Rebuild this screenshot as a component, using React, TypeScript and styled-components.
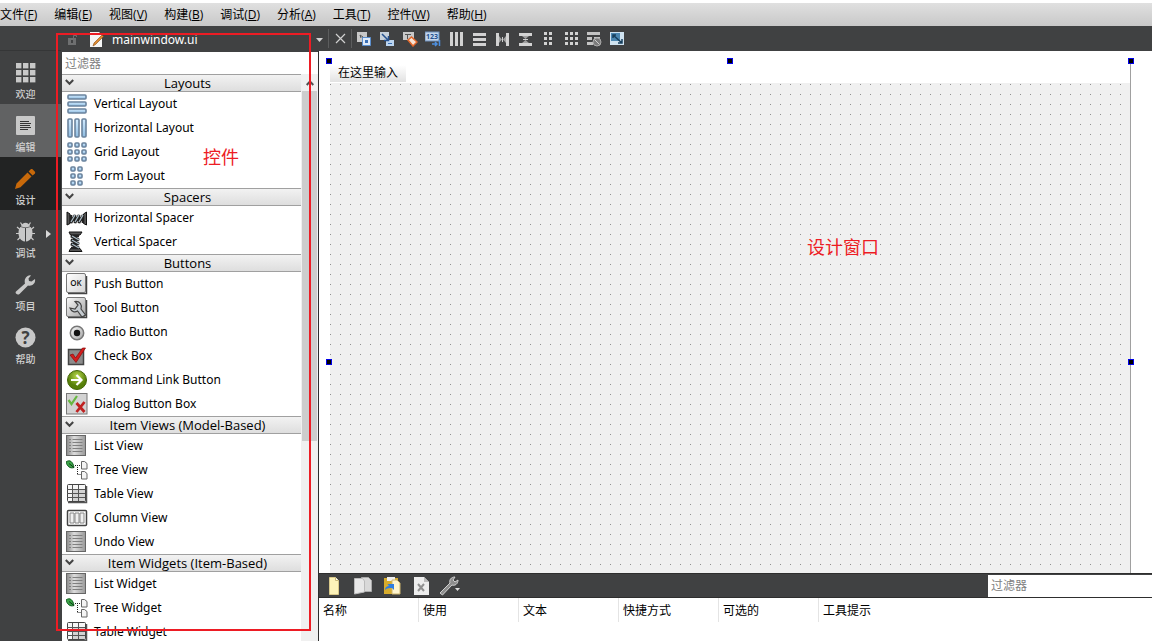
import React from 'react';
import styled, { createGlobalStyle } from 'styled-components';

const Global = createGlobalStyle`
  * { box-sizing: border-box; }
  body {
    margin: 0;
    background: #fff;
    color: #000;
    font: 12px/16px "Open Sans", "Noto Sans CJK SC", sans-serif;
  }
  button, input { font: inherit; color: inherit; border: 0; margin: 0; padding: 0; background: none; border-radius: 0; }
  button { cursor: pointer; }
  svg { display: block; flex: none; }
`;

const Window = styled.div`
  position: relative;
  display: flex;
  flex-direction: column;
  height: 100vh;
  overflow: hidden;
`;

const MenuBar = styled.nav`
  flex: none;
  display: flex;
  gap: 17px;
  height: 26px;
  border-top: 3px solid #fff;
  background: linear-gradient(#e0e0e0, #c8c8c8);
`;

const MenuButton = styled.button`
  white-space: nowrap;
  u { text-underline-offset: 1px; }
`;

const Body = styled.div`
  flex: 1;
  display: flex;
  min-height: 0;
`;

const Rail = styled.aside`
  flex: none;
  width: 61px;
  background: #404142;
`;

const RailTop = styled.div`
  height: 25px;
  border-bottom: 1px solid #353637;
`;

const ModeButton = styled.button<{ $tone?: string }>`
  position: relative;
  display: flex;
  flex-direction: column;
  align-items: center;
  gap: 4px;
  width: 100%;
  height: 53px;
  padding: 11px 10px 0 0;
  background: ${(p) => p.$tone ?? 'transparent'};
  color: #d0d0d0;
  font: 500 10px/14px "Noto Sans CJK SC", sans-serif;
`;

const FlyoutArrow = styled.svg`
  position: absolute;
  right: 10px;
  top: 20px;
`;

const Main = styled.div`
  flex: 1;
  min-width: 0;
  display: flex;
  flex-direction: column;
  background: #404142;
`;

const Toolbar = styled.header`
  flex: none;
  display: flex;
  align-items: center;
  height: 25px;
`;

const FileTab = styled.button`
  display: flex;
  align-items: center;
  width: 267px;
  padding: 2px 5px 0 6px;
  color: #fff;
  font-family: "Noto Sans", sans-serif;
  text-align: left;
`;

const FileName = styled.span`
  flex: 1;
  padding-left: 7px;
`;

const FileIconSlot = styled.span`
  padding-left: 13px;
`;

const Divider = styled.i`
  width: 1px;
  height: 19px;
  background: #5c5d5e;
`;

const ToolButton = styled.button<{ $narrow?: boolean }>`
  display: grid;
  place-items: center;
  width: ${(p) => (p.$narrow ? 22 : 23)}px;
  height: 25px;
`;

const Workspace = styled.div`
  flex: 1;
  display: flex;
  min-height: 0;
`;

const WidgetBox = styled.section`
  flex: none;
  display: flex;
  flex-direction: column;
  width: 258px;
  padding: 1px 0 0 1px;
  border-right: 1px solid #2e2e2e;
`;

const FilterInput = styled.input<{ $width?: string }>`
  width: ${(p) => p.$width ?? '100%'};
  height: 22px;
  padding: 0 3px;
  background: #fff;
  outline: 0;
  &::placeholder { color: #808080; opacity: 1; }
`;

const ListArea = styled.div`
  flex: 1;
  display: flex;
  min-height: 0;
  overflow: hidden;
  background: #fff;
`;

const Groups = styled.div`
  flex: 1;
`;

const GroupHeader = styled.button`
  display: flex;
  align-items: center;
  width: 100%;
  height: 18px;
  padding-left: 3px;
  border-top: 1px solid #a0a0a0;
  border-bottom: 1px solid #a0a0a0;
  background: linear-gradient(#f2f2f2, #dedede);
  font-size: 13px;
  span { flex: 1; text-align: center; }
`;

const Items = styled.ul`
  margin: 0;
  padding: 0;
  list-style: none;
`;

const Item = styled.li`
  display: flex;
  align-items: center;
  gap: 6px;
  height: 24px;
  padding-left: 4px;
  font-family: "Noto Sans", sans-serif;
  white-space: nowrap;
`;

const ItemName = styled.span`
  padding-bottom: 1px;
`;

const ScrollTrack = styled.div`
  display: flex;
  flex-direction: column;
  align-items: center;
  width: 17px;
  padding: 0 1px;
  background: #f0f0f0;
`;

const ScrollUp = styled.button`
  display: grid;
  place-items: center;
  width: 15px;
  height: 17px;
`;

const ScrollThumb = styled.div`
  width: 15px;
  height: 350px;
  background: #cdcdcd;
`;

const Editor = styled.main`
  flex: 1;
  min-width: 0;
  display: flex;
  flex-direction: column;
`;

const Canvas = styled.section`
  flex: 1;
  min-height: 0;
  overflow: hidden;
  padding: 10px;
  background: #fff;
`;

const Form = styled.div`
  position: relative;
  display: flex;
  flex-direction: column;
  width: 802px;
  height: 602px;
  border-left: 1px solid #fff;
  border-right: 1px solid #a0a0a0;
`;

const FormMenu = styled.div`
  height: 22px;
`;

const TypeHere = styled.button`
  height: 21px;
  padding: 2px 8px 0;
  background: linear-gradient(#fff 20%, #e2e2e2);
`;

const FormGrid = styled.div`
  flex: 1;
  background: #f0f0f0 conic-gradient(from 270deg at 1px 1px, #909090 90deg, transparent 0) 0 1px / 10px 10px;
`;

const Handle = styled.i<{ $x: string; $y: string }>`
  position: absolute;
  left: ${(p) => p.$x};
  top: ${(p) => p.$y};
  width: 6px;
  height: 6px;
  border: 1px solid #0000e8;
  background: #000;
`;

const ActionPanel = styled.section`
  flex: none;
  height: 68px;
  background: #fff;
`;

const ActionBar = styled.div`
  display: flex;
  align-items: center;
  height: 25px;
  border-top: 1px solid #2e2e2e;
  border-bottom: 1px solid #2e2e2e;
  background: #404142;
`;

const ActionButton = styled.button`
  display: grid;
  place-items: center;
  width: 29px;
  height: 23px;
`;

const Spring = styled.div`
  flex: 1;
`;

const ActionTable = styled.table`
  border-collapse: separate;
  border-spacing: 0;
  table-layout: fixed;
  width: 100%;
  th {
    width: 100px;
    height: 24px;
    padding: 2px 4px 0;
    border-right: 1px solid #e4e4e4;
    font-weight: 400;
    text-align: left;
    white-space: nowrap;
  }
  th:last-child { width: auto; border: 0; }
`;

const MarkerFrame = styled.div`
  position: absolute;
  left: 56px;
  top: 33px;
  width: 255px;
  height: 598px;
  border: 2px solid #ed1c24;
  pointer-events: none;
`;

const MarkerText = styled.span<{ $x: number; $y: number }>`
  position: absolute;
  left: ${(p) => p.$x}px;
  top: ${(p) => p.$y}px;
  color: #ed1c24;
  font: 18px/24px "Noto Sans CJK SC", sans-serif;
`;

/* ---------- mode icons ---------- */

const light = '#c8c8c8';

const WelcomeIcon = () => (
  <svg width="21" height="21" viewBox="0 0 21 21" fill={light}>
    {[1, 8, 15].map((y) => [1, 8, 15].map((x) => <rect key={x + '-' + y} x={x} y={y} width="5.4" height="5.4" />))}
  </svg>
);
const EditIcon = () => (
  <svg width="21" height="21" viewBox="0 0 21 21">
    <rect x="1" y="1" width="19" height="19" rx="1" fill={light} />
    <path d="M5 6.500h9M5 8.500h11M5 10.500h10M5 12.500h11M5 14.500h8" stroke="#333" />
  </svg>
);
const DesignIcon = () => (
  <svg width="21" height="21" viewBox="0 0 21 21" fill="#c8690a">
    <path d="M0 21l1.500-5.500L12.500 4.500l4 4L5.500 19.300zM13.600 3.400L16 1l1.200.1 3 3-.2 1.300-2.400 2.200z" />
  </svg>
);
const DebugIcon = () => (
  <svg width="21" height="21" viewBox="0 0 21 21">
    <path d="M7 4L5.500 1.500M14 4l1.500-2.500M5 8.500L2 6M16 8.500L19 6M5 12.500H1M16 12.500h4M5.500 16l-3 3M15.500 16l3 3" stroke={light} strokeWidth="1.200" />
    <path d="M6 5.500C7 .5 14 .5 15 5.500l-4.500 1zM10 7v13.500C5.500 20 3.500 16 3.500 12c0-2.500.5-4 1.800-6zM11 7v13.500c4.500-.5 6.500-4.500 6.500-8.500 0-2.500-.5-4-1.800-6z" fill={light} />
  </svg>
);
const ProjectIcon = () => (
  <svg width="21" height="21" viewBox="0 0 21 21">
    <path d="M1 17.500L10 9.500C9 6 10.500 2 15 1.200l1 .3-2.500 3 .5 2.500 2.500.5 3.500-2.500c.8 4-2.500 7.500-7 6.500L4.500 20C2.500 21.500-.5 19.500 1 17.500z" fill={light} />
  </svg>
);
const HelpIcon = () => (
  <svg width="21" height="21" viewBox="0 0 21 21">
    <circle cx="10.500" cy="10.500" r="10" fill={light} />
    <text x="10.500" y="16.500" textAnchor="middle" fill="#404142" fontFamily="Open Sans, sans-serif" fontWeight="700" fontSize="17">?</text>
  </svg>
);

/* ---------- toolbar icons ---------- */

const Chevron = () => (
  <svg width="9" height="8" viewBox="0 0 9 8"><path d="M.8 1l3.700 3.800L8.200 1" fill="none" stroke="#444" strokeWidth="2" /></svg>
);
const DownArrow = () => <svg width="7" height="4" viewBox="0 0 7 4"><path d="M0 0h7L3.500 4z" fill="#d0d0d0" /></svg>;

const T = ({ children }: { children: React.ReactNode }) => (
  <svg width="16" height="16" viewBox="0 0 16 16">{children}</svg>
);

const designTools: [string, React.ReactNode][] = [
  ['编辑控件', <T><path d="M1 1h10v5H6v5H1z" fill="#c8c8c8" /><path d="M4 4l3 2M4 4l1 3" stroke="#555" fill="none" /><path d="M6.500 6.500h8v8h-8z" fill="#dfeaf8" stroke="#5b8fce" /><rect x="9" y="9" width="3" height="3" fill="#3a6fb5" /></T>],
  ['编辑信号/槽', <T><path d="M1 1h9v8H1z" fill="#c4cfda" /><path d="M7 9h8v6H7z" fill="#bcd5f0" /><path d="M3 3l6 6M9.500 5v4.500H5" stroke="#24508e" strokeWidth="1.500" fill="none" /><path d="M9 12.500h4" stroke="#3a6fb5" /></T>],
  ['编辑伙伴', <T><path d="M1 1h11v8H1z" fill="#c8c8c8" /><path d="M3 3.500h6M5.500 3.500V8" stroke="#555" /><path d="M6 9l3.500-3 5.500 5-4 4z" fill="#f7e3d4" stroke="#e2672a" strokeWidth="1.500" /></T>],
  ['编辑 Tab 顺序', <T><rect x="0" y="1" width="14" height="9" fill="#c3d6ec" stroke="#6c8fbb" /><text x="1" y="8" fontSize="7" fontWeight="700" fontFamily="Open Sans, sans-serif" fill="#24508e">123</text><path d="M7 13h5M10 11l2 2-2 2M14.500 9v6" stroke="#4c8fe0" fill="none" strokeWidth="1.500" /></T>],
  ['水平布局', <T><path d="M2 1h3v14H2zM7 1h3v14H7zM12 1h3v14h-3z" fill="#d2d2d2" /></T>],
  ['垂直布局', <T><path d="M2 2h13v3H2zM2 7h13v3H2zM2 12h13v3H2z" fill="#d2d2d2" /></T>],
  ['使用分裂器水平布局', <T><path d="M2 2h3v13H2zM12 2h3v13h-3z" fill="#d2d2d2" /><path d="M5 5l3 3.500L5 12zM12 5L9 8.500l3 3.500z" fill="#a0a0a0" /><path d="M8.500 6v5" stroke="#ccc" /></T>],
  ['使用分裂器垂直布局', <T><path d="M2 2h13v3H2zM2 12h13v3H2z" fill="#d2d2d2" /><path d="M5 5l3.500 3L12 5zM5 12l3.500-3 3.500 3z" fill="#a0a0a0" /><path d="M6 8.500h5" stroke="#ccc" /></T>],
  ['在窗体布局中布局', <T><path d="M4 1h3v3H4zM9 1h3v3H9zM4 6h3v3H4zM9 6h3v3H9zM4 11h3v3H4zM9 11h3v3H9z" fill="#d2d2d2" /></T>],
  ['栅格布局', <T><path d="M2 1h3v3H2zM7 1h3v3H7zM12 1h3v3h-3zM2 6h3v3H2zM7 6h3v3H7zM12 6h3v3h-3zM2 11h3v3H2zM7 11h3v3H7zM12 11h3v3h-3z" fill="#d2d2d2" /></T>],
  ['打破布局', <T><path d="M1 1h13v3H1zM1 6h5v3H1zM8 6h6v2H8zM1 11h6v3H1z" fill="#c4c4c4" /><circle cx="11" cy="11" r="4" fill="#7b7b7b" stroke="#aaa" /><path d="M8.500 8.500l5 5" stroke="#ccc" /></T>],
  ['调整大小', <T><rect x="1" y="1" width="14" height="13" fill="#cfe2f0" /><path d="M2 2h9v8H2z" fill="#4b86b0" /><path d="M4 4l9 8M4 7V4h3M13 8v4H9" stroke="#173f5d" fill="none" strokeWidth="1.500" /></T>],
];

/* ---------- widget icons ---------- */

const W = ({ children }: { children: React.ReactNode }) => (
  <svg width="22" height="22" viewBox="0 0 22 22">{children}</svg>
);
const Defs = () => (
  <svg width="0" height="0" aria-hidden="true">
    <defs>
      <linearGradient id="blue" x2="0" y2="1"><stop stopColor="#d4ecff" /><stop offset="1" stopColor="#8dbbe0" /></linearGradient>
      <linearGradient id="gray" x2="1" y2="1"><stop stopColor="#fafafa" /><stop offset="1" stopColor="#a4a4a4" /></linearGradient>
      <linearGradient id="push" x2="1" y2="1"><stop stopColor="#fff" /><stop offset="1" stopColor="#d4d4d4" /></linearGradient>
      <linearGradient id="list" x2="1"><stop stopColor="#888" /><stop offset=".4" stopColor="#ddd" /><stop offset="1" stopColor="#999" /></linearGradient>
      <radialGradient id="green" cy=".3"><stop stopColor="#b7d84c" /><stop offset="1" stopColor="#567f09" /></radialGradient>
    </defs>
  </svg>
);

const blueBox = (x: number, y: number, w: number, h: number) => (
  <rect key={x + ',' + y} x={x + 1} y={y + 1} width={w} height={h} rx="1" fill="url(#blue)" stroke="#6a839d" strokeWidth="1.600" />
);
const VLayout = () => <W>{[1, 8, 15].map((y) => blueBox(1, y, 18, 4))}</W>;
const HLayout = () => <W>{[1, 8, 15].map((x) => blueBox(x, 1, 4, 18))}</W>;
const GridLayout = () => <W>{[1, 8, 15].map((y) => [1, 8, 15].map((x) => blueBox(x, y, 4, 4)))}</W>;
const FormLayout = () => <W>{[1, 8, 15].map((y) => [4, 11].map((x) => blueBox(x, y, 4, 4)))}</W>;
const spring = (
  <>
    <path d="M1 5v13l3-1.500V7zM20.500 5v13l-3-1.500V7z" fill="#555" stroke="#111" />
    <path d="M5 8v8l4-8v8l4-8v8l4-8v8" fill="none" stroke="#222" strokeWidth="2.600" />
    <path d="M5 15l4-7M9 15l4-7M13 15l4-7" stroke="#a9bbc5" strokeWidth="1.300" />
  </>
);
const HSpacer = () => <W>{spring}</W>;
const VSpacer = () => <W><g transform="rotate(90 11 11) translate(0 1)">{spring}</g></W>;
const Plate = ({ fill }: { fill: string }) => (
  <>
    <path d="M2 20.500h18.500V3" fill="none" stroke="#444" strokeWidth="1.500" />
    <rect x=".5" y=".5" width="19" height="19" rx="1.500" fill={fill} stroke="#777" />
  </>
);
const PushIcon = () => (
  <W>
    <Plate fill="url(#push)" />
    <text x="10" y="12.500" textAnchor="middle" fontSize="8" fontWeight="600" fontFamily="Open Sans, sans-serif" fill="#111">OK</text>
  </W>
);
const ToolIcon = () => (
  <W>
    <Plate fill="url(#gray)" />
    <path d="M4 11c1.500 4 5 4.500 7.500 3l4.500 6 3.500-2-4.500-6c1.500-4-1-8-6-7.500l3 3.500-3 4z" fill="#c5cbd0" stroke="#444" strokeWidth="1.200" />
  </W>
);
const RadioIcon = () => (
  <W>
    <circle cx="11" cy="12" r="6.700" fill="url(#gray)" stroke="#777" strokeWidth="1.500" />
    <circle cx="11" cy="12" r="3.200" fill="#111" />
  </W>
);
const CheckIcon = () => (
  <W>
    <rect x="2.500" y="4.500" width="15" height="15" fill="#8c8c8c" stroke="#444" strokeWidth="1.500" />
    <path d="M4 10l3-1 2.500 4L16.500 3h3L10 17.500z" fill="#d51d1d" stroke="#8c0808" strokeWidth=".7" />
  </W>
);
const CommandIcon = () => (
  <W>
    <circle cx="11" cy="11" r="9.500" fill="url(#green)" stroke="#446607" />
    <path d="M5 11h10M10.500 6l5 5-5 5" fill="none" stroke="#fff" strokeWidth="2.200" />
  </W>
);
const DialogIcon = () => (
  <W>
    <rect x=".5" y=".5" width="20.500" height="20.500" fill="#d3d3d3" stroke="#777" />
    <path d="M2.500 7l3 4L11 3" fill="none" stroke="#67b842" strokeWidth="2.200" />
    <path d="M10.500 10l8 9M18.500 9l-8 10" stroke="#c02222" strokeWidth="2.800" />
  </W>
);
const ListIcon = () => (
  <W>
    <rect x=".5" y=".5" width="19" height="20" fill="url(#list)" stroke="#666" />
    <path d="M3 4.500h2M3 7.500h2M3 10.500h2M3 13.500h2M3 16.500h2M6.500 4.500h10M6.500 7.500h10M6.500 10.500h10M6.500 13.500h10M6.500 16.500h10" stroke="#808080" />
  </W>
);
const TreeIcon = () => (
  <W>
    <path d="M0 3c4-3 7 0 8 5.500C4 10 1 7 0 3z" fill="#3ba447" stroke="#125c20" />
    <path d="M8 8.500L3 4.500" stroke="#0d3d15" />
    <path d="M9 6.500h6M11.500 8v8M11.500 15.500H15" stroke="#222" strokeDasharray="1 1" />
    <path d="M15.500 2.500h3l2.500 2V10h-5.500zM15.500 12.500h3l2.500 2V20h-5.500z" fill="#f4f4f4" stroke="#666" />
  </W>
);
const TableIcon = () => (
  <W>
    <path d="M2 19.500h18.500V3" fill="none" stroke="#555" strokeWidth="1.500" />
    <rect x="1.500" y="1.500" width="18" height="17" rx="1" fill="#d2d2d2" stroke="#444" />
    <path d="M2 2h17v4H2zM2 6h4v12H2z" fill="#f6f6f6" />
    <path d="M1 6.500h18M1 10.500h18M1 14.500h18M6.500 2v16M12.500 2v16" stroke="#555" />
  </W>
);
const ColumnIcon = () => (
  <W>
    <rect x="1.500" y="3.500" width="19" height="15" rx="1" fill="#fff" stroke="#444" strokeWidth="1.500" />
    <path d="M4 6h4v10H4zM9 6h4v10H9zM14 6h4v10h-4z" fill="#f0f0f0" stroke="#888" />
  </W>
);

const groups: { title: string; items: [string, React.FC][] }[] = [
  { title: 'Layouts', items: [['Vertical Layout', VLayout], ['Horizontal Layout', HLayout], ['Grid Layout', GridLayout], ['Form Layout', FormLayout]] },
  { title: 'Spacers', items: [['Horizontal Spacer', HSpacer], ['Vertical Spacer', VSpacer]] },
  {
    title: 'Buttons',
    items: [['Push Button', PushIcon], ['Tool Button', ToolIcon], ['Radio Button', RadioIcon], ['Check Box', CheckIcon], ['Command Link Button', CommandIcon], ['Dialog Button Box', DialogIcon]],
  },
  { title: 'Item Views (Model-Based)', items: [['List View', ListIcon], ['Tree View', TreeIcon], ['Table View', TableIcon], ['Column View', ColumnIcon], ['Undo View', ListIcon]] },
  { title: 'Item Widgets (Item-Based)', items: [['List Widget', ListIcon], ['Tree Widget', TreeIcon], ['Table Widget', TableIcon]] },
];

const menus = [['文件', 'F'], ['编辑', 'E'], ['视图', 'V'], ['构建', 'B'], ['调试', 'D'], ['分析', 'A'], ['工具', 'T'], ['控件', 'W'], ['帮助', 'H']];

const modes: { label: string; Icon: React.FC; tone?: string; flyout?: boolean }[] = [
  { label: '欢迎', Icon: WelcomeIcon },
  { label: '编辑', Icon: EditIcon, tone: '#616263' },
  { label: '设计', Icon: DesignIcon, tone: '#222323' },
  { label: '调试', Icon: DebugIcon, flyout: true },
  { label: '项目', Icon: ProjectIcon },
  { label: '帮助', Icon: HelpIcon },
];

/* ---------- action panel icons ---------- */

const A = ({ children }: { children: React.ReactNode }) => (
  <svg width="22" height="20" viewBox="0 0 22 20">{children}</svg>
);

const actions: [string, React.ReactNode][] = [
  ['新建', <A><path d="M6.500 1.500h6l3 3v14h-9z" fill="#fdf3b9" stroke="#d9c98a" /><path d="M12.500 1.500v3h3" fill="#fff" stroke="#c9b878" /></A>],
  ['复制', <A><path d="M9.500 1.500h7l3 3v11h-10z" fill="#d9d9d9" stroke="#aaa" /><path d="M2.500 2.500h8l2 2.500v11l-10 2z" fill="#e8e8e8" stroke="#bbb" /></A>],
  ['粘贴', <A><path d="M3 2h14v16H3z" fill="#d7ac2c" /><path d="M6 1h8v4H6z" fill="#eee" /><path d="M11 4h5l3 3v11h-8z" fill="#fff5cf" stroke="#cdb56c" /><path d="M4 14c0-3 2-4 4-4L6.500 8H13v6l-2-2c-2 0-5 0-7 2z" fill="#2f7de0" /></A>],
  ['删除', <A><path d="M4 1h10l5 5v13H4z" fill="#ededed" /><path d="M14 1v5h5" fill="#bbb" /><path d="M8 8l6 7M14 8l-6 7" stroke="#909090" strokeWidth="2" /></A>],
  ['配置', <A><path d="M1 17L11 7c-1-3 1-6 5-6l-2 3 2 2 3-2c0 4-3 6-6 5L3.500 19z" fill="#8d8d8d" stroke="#d0d0d0" /><path d="M16 12h5l-2.500 3z" fill="#e0e0e0" /></A>],
];

const columns = ['名称', '使用', '文本', '快捷方式', '可选的', '工具提示'];

const handles: [string, string][] = [
  ['-4px', '-3px'],
  ['calc(50% - 3px)', '-3px'],
  ['calc(100% - 2px)', '-3px'],
  ['-4px', 'calc(50% - 3px)'],
  ['calc(100% - 2px)', 'calc(50% - 3px)'],
];

export default function App() {
  return (
    <Window>
      <Global />
      <MenuBar>
        {menus.map(([label, key]) => (
          <MenuButton key={key}>{label}(<u>{key}</u>)</MenuButton>
        ))}
      </MenuBar>
      <Body>
        <Rail>
          <RailTop />
          {modes.map(({ label, Icon, tone, flyout }) => (
            <ModeButton key={label} $tone={tone}>
              <Icon />
              {label}
              {flyout && <FlyoutArrow width="5" height="8" viewBox="0 0 5 8"><path d="M0 0l5 4-5 4z" fill="#d8d8d8" /></FlyoutArrow>}
            </ModeButton>
          ))}
        </Rail>
        <Main>
          <Toolbar>
            <FileTab>
              <svg width="10" height="12" viewBox="0 0 10 12"><path d="M1 4h8v7H1z" fill="#6e6f70" /><path d="M6.500 4V1.500h3V3" fill="none" stroke="#6e6f70" /><path d="M4 6h2v3H4z" fill="#404142" /></svg>
              <FileIconSlot>
                <svg width="15" height="16" viewBox="0 0 15 16"><path d="M0 0h9l3 3v12H0z" fill="#f5f5f5" /><path d="M3 14l1-3 8-8 1.500 1.500-8 8z" fill="#dc8a32" stroke="#8a4b12" strokeWidth=".6" /></svg>
              </FileIconSlot>
              <FileName>mainwindow.ui</FileName>
              <DownArrow />
            </FileTab>
            <Divider />
            <ToolButton $narrow aria-label="关闭"><svg width="11" height="11" viewBox="0 0 11 11"><path d="M1 1l9 9M10 1l-9 9" stroke="#d0d0d0" strokeWidth="1.200" /></svg></ToolButton>
            <Divider />
            {designTools.map(([label, icon]) => <ToolButton key={label} aria-label={label}>{icon}</ToolButton>)}
          </Toolbar>
          <Workspace>
            <WidgetBox>
              <FilterInput placeholder="过滤器" aria-label="过滤器" />
              <ListArea>
                <Groups>
                  {groups.map((g) => (
                    <section key={g.title}>
                      <GroupHeader><Chevron /><span>{g.title}</span></GroupHeader>
                      <Items>
                        {g.items.map(([name, Icon]) => <Item key={name}><Icon /><ItemName>{name}</ItemName></Item>)}
                      </Items>
                    </section>
                  ))}
                </Groups>
                <ScrollTrack>
                  <ScrollUp aria-label="向上滚动"><svg width="8" height="6" viewBox="0 0 8 6"><path d="M.7 5L4 1.500 7.300 5" fill="none" stroke="#505050" strokeWidth="2" /></svg></ScrollUp>
                  <ScrollThumb />
                </ScrollTrack>
              </ListArea>
            </WidgetBox>
            <Editor>
              <Canvas>
                <Form>
                  <FormMenu><TypeHere>在这里输入</TypeHere></FormMenu>
                  <FormGrid />
                  {handles.map(([x, y]) => <Handle key={x + y} $x={x} $y={y} />)}
                </Form>
              </Canvas>
              <ActionPanel>
                <ActionBar>
                  {actions.map(([label, icon]) => <ActionButton key={label} aria-label={label}>{icon}</ActionButton>)}
                  <Spring />
                  <FilterInput $width="164px" placeholder="过滤器" aria-label="过滤动作" />
                </ActionBar>
                <ActionTable>
                  <thead><tr>{columns.map((c) => <th key={c} scope="col">{c}</th>)}</tr></thead>
                </ActionTable>
              </ActionPanel>
            </Editor>
          </Workspace>
        </Main>
      </Body>
      <MarkerFrame />
      <MarkerText $x={203} $y={144}>控件</MarkerText>
      <MarkerText $x={807} $y={234}>设计窗口</MarkerText>
      <Defs />
    </Window>
  );
}
